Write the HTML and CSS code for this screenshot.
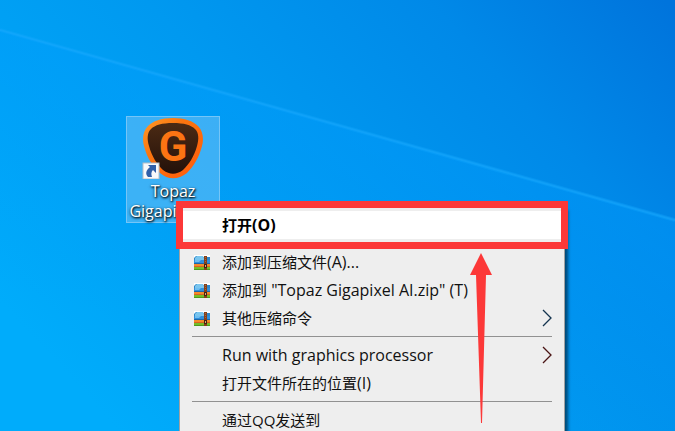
FILE: index.html
```html
<!DOCTYPE html>
<html lang="zh-CN">
<head>
<meta charset="utf-8">
<meta name="viewport" content="width=device-width, initial-scale=1">
<title>Topaz Gigapixel AI</title>
<link rel="stylesheet" href="styles.css">
</head>
<body>
<svg width="0" height="0" class="symbols" aria-hidden="true">
  <symbol id="archive" viewBox="0 0 16 15">
    <rect width="16" height="15" fill="#fff"/>
    <path d="M0 3 2 1h5l2 1h7v4H0z" fill="#2f86c8"/>
    <path d="M1 3 3 1h6l1 2 0 2-3 1H1z" fill="#79c5ee"/>
    <rect y="5" width="16" height="3" fill="#2f8fdc"/>
    <path d="M1 5h6l-2 2H1z" fill="#6dbdf0"/>
    <rect y="8" width="16" height="1" fill="#1e66a8"/>
    <rect y="9" width="16" height="3" fill="#f58a2a"/>
    <rect y="11" width="16" height="1" fill="#d86420"/>
    <rect y="12" width="16" height="3" fill="#74bd27"/>
    <rect y="14" width="16" height="1" fill="#4c9a1c"/>
    <path d="M10 1h3v14h-3z" fill="#85401a"/>
    <path d="M11 2h1v1h-1zM11 4h1v1h-1zM11 6h1v1h-1z" fill="#a8643c"/>
    <path d="M10 9h3v4h-3z" fill="#472211"/>
    <path d="M11 10h1v2h-1z" fill="#d5aa71"/>
  </symbol>
  <symbol id="chevron" viewBox="0 0 10 18">
    <path d="M1 1 9 9 1 17" fill="none" stroke="currentColor" stroke-width="1.3"/>
  </symbol>
</svg>
<main class="desktop">
  <svg class="wallpaper" viewBox="0 0 675 431" preserveAspectRatio="none" aria-hidden="true">
    <defs>
      <linearGradient id="sky" gradientUnits="userSpaceOnUse" x1="90" y1="400" x2="600" y2="-70">
        <stop offset="0" stop-color="#00acfb"/>
        <stop offset=".45" stop-color="#0099f0"/>
        <stop offset=".75" stop-color="#0089e8"/>
        <stop offset="1" stop-color="#0074dc"/>
      </linearGradient>
      <linearGradient id="glow" gradientUnits="userSpaceOnUse" x1="337" y1="125" x2="270" y2="363">
        <stop offset="0" stop-color="#009cff" stop-opacity=".35"/>
        <stop offset="1" stop-color="#009cff" stop-opacity="0"/>
      </linearGradient>
    </defs>
    <rect width="675" height="431" fill="url(#sky)"/>
    <path d="M0 30 675 220V431H0z" fill="url(#glow)"/>
    <path d="M0 30 675 220" stroke="#12a7ff" stroke-width="4" opacity=".35"/>
    <path d="M0 30 675 220" stroke="#20adff" stroke-width="2" opacity=".35"/>
  </svg>

  <button class="shortcut" type="button">
    <svg class="shortcut-logo" viewBox="0 0 62 62" aria-hidden="true">
      <defs>
        <linearGradient id="rim" x1="0" y1="0" x2="1" y2="1">
          <stop offset="0" stop-color="#ff9a28"/>
          <stop offset=".35" stop-color="#fb750f"/>
          <stop offset="1" stop-color="#ff5a0c"/>
        </linearGradient>
        <linearGradient id="core" x1="0" y1="0" x2="0" y2="1">
          <stop offset="0" stop-color="#4b2a14"/>
          <stop offset="1" stop-color="#24110a"/>
        </linearGradient>
      </defs>
      <path d="M31 1C43 1 51 4 56 9C61 14 62 22 60 29C57 41 51 50 45 56C36 63 26 63 18 56C11 50 5 41 2 29C0 22 1 14 6 9C11 4 19 1 31 1z" fill="url(#rim)"/>
      <path d="M31 6C42 6 49 8 53 12C57 16 57 22 55 29C52 40 47 47 41 53C34 58 28 58 21 53C15 47 10 40 7 29C5 22 5 16 9 12C13 8 20 6 31 6z" fill="url(#core)"/>
      <text x="31" y="44" text-anchor="middle" class="logo-letter">G</text>
      <rect x="1" y="46" width="16" height="16" fill="#f7f9fb" stroke="#b5bdc5"/>
      <path d="M6 48h8v8l-3-3c-2 2-2 4-1 7H6c-3-3-2-7 2-10z" fill="#2f5fa9"/>
    </svg>
    <span class="shortcut-name latin">Topaz Gigapixel AI</span>
  </button>

  <div class="menu" role="menu">
    <button class="item item-active" type="button" role="menuitem"><span class="label">打开<span class="latin">(O)</span></span></button>
    <hr class="rule">
    <button class="item" type="button" role="menuitem"><svg class="item-icon" aria-hidden="true"><use href="#archive"/></svg><span class="label">添加到压缩文件<span class="latin">(A)...</span></span></button>
    <button class="item" type="button" role="menuitem"><svg class="item-icon" aria-hidden="true"><use href="#archive"/></svg><span class="label">添加到<span class="latin"> "Topaz Gigapixel AI.zip" (T)</span></span></button>
    <button class="item" type="button" role="menuitem"><svg class="item-icon" aria-hidden="true"><use href="#archive"/></svg><span class="label">其他压缩命令</span><svg class="chevron chevron-blue" aria-hidden="true"><use href="#chevron"/></svg></button>
    <hr class="rule">
    <button class="item" type="button" role="menuitem"><span class="label latin">Run with graphics processor</span><svg class="chevron chevron-red" aria-hidden="true"><use href="#chevron"/></svg></button>
    <button class="item" type="button" role="menuitem"><span class="label">打开文件所在的位置<span class="latin">(I)</span></span></button>
    <hr class="rule">
    <button class="item" type="button" role="menuitem"><span class="label">通过QQ发送到</span></button>
  </div>

  <div class="callout"></div>
  <svg class="arrow" viewBox="0 0 22 170" aria-hidden="true">
    <path d="M11 0 22 22H16L12 170H11L6 22H0z" fill="#fc3838"/>
  </svg>
</main>
</body>
</html>
```

FILE: styles.css
```css
* {
  box-sizing: border-box;
}

body {
  margin: 0;
  font: 15px/20px "Open Sans", "Noto Sans CJK SC", sans-serif;
}

button {
  margin: 0;
  border: 0;
  font: inherit;
  color: inherit;
}

.latin {
  font-size: 16px;
}

.symbols {
  position: absolute;
}

.desktop {
  position: relative;
  height: 100vh;
  overflow: hidden;
  background: #009cf5;
}

.wallpaper {
  display: block;
  width: 100%;
  height: 100%;
}

.shortcut {
  position: absolute;
  left: 126px;
  top: 116px;
  width: 94px;
  padding: 0 0 1px;
  display: flex;
  flex-direction: column;
  align-items: center;
  gap: 2px;
  border: 1px solid #75c5f7;
  background: rgba(120, 196, 245, 0.5);
}

.shortcut-logo {
  width: 62px;
  height: 62px;
}

.logo-letter {
  font: bold 42px Roboto, sans-serif;
  fill: #fb7413;
}

.shortcut-name {
  color: #fff;
  text-shadow: 1px 1px 2px #000, 0 1px 3px rgba(0, 0, 0, 0.7);
}

.menu {
  position: absolute;
  left: 179px;
  top: 207px;
  width: 386px;
  padding: 3px;
  border: 1px solid #a0a0a0;
  background: #eee;
  color: #111;
  box-shadow: 3px 3px 3px rgba(0, 0, 0, 0.5);
}

.item {
  display: grid;
  grid-template-columns: 16px 1fr 10px;
  column-gap: 12px;
  align-items: center;
  width: 100%;
  height: 28px;
  padding: 0 9px 0 11px;
  background: none;
  text-align: left;
}

.item-active {
  background: #fff;
  color: #000;
  font-weight: bold;
}

.item-icon {
  grid-column: 1;
  width: 16px;
  height: 15px;
}

.label {
  grid-column: 2;
  white-space: nowrap;
}

.chevron {
  grid-column: 3;
  width: 10px;
  height: 18px;
}

.chevron-blue {
  color: #14344f;
}

.chevron-red {
  color: #4a1414;
}

.rule {
  height: 1px;
  margin: 4px 9px;
  border: 0;
  background: #919191;
}

.callout {
  position: absolute;
  left: 176px;
  top: 201px;
  width: 392px;
  height: 48px;
  border: 7px solid #fc3838;
}

.arrow {
  position: absolute;
  left: 470px;
  top: 253px;
  width: 22px;
  height: 170px;
}
```
